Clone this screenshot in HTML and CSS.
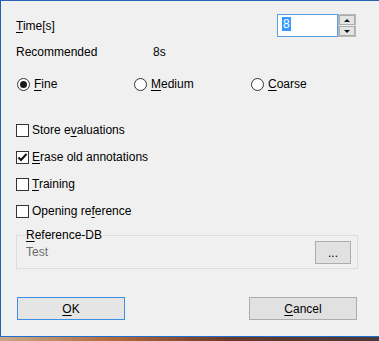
FILE: index.html
```html
<!DOCTYPE html>
<html lang="en">
<head>
    <meta charset="UTF-8">
    <title>Evaluation settings</title>
    <link rel="stylesheet" href="styles.css">
</head>
<body>
    <div class="dialog">
        <div class="row row-time">
            <span><u>T</u>ime[s]</span>
            <div class="spin">
                <div class="spin-field"><span class="sel">8</span></div>
                <div class="spin-btns">
                    <div class="spin-btn"><span class="arrow-up"></span></div>
                    <div class="spin-btn"><span class="arrow-down"></span></div>
                </div>
            </div>
        </div>

        <div class="row row-rec">
            <span class="rec-label">Recommended</span>
            <span>8s</span>
        </div>

        <div class="row row-radios">
            <label class="radio-item"><span class="radio checked"></span><span><u>F</u>ine</span></label>
            <label class="radio-item"><span class="radio"></span><span><u>M</u>edium</span></label>
            <label class="radio-item"><span class="radio"></span><span><u>C</u>oarse</span></label>
        </div>

        <div class="checks">
            <label class="check-item"><span class="box"></span><span>Store e<u>v</u>aluations</span></label>
            <label class="check-item"><span class="box">
                <svg width="11" height="11" viewBox="0 0 11 11"><path d="M1.5 5.5 L4 8 L9.5 2" fill="none" stroke="#111" stroke-width="2"/></svg>
            </span><span><u>E</u>rase old annotations</span></label>
            <label class="check-item"><span class="box"></span><span><u>T</u>raining</span></label>
            <label class="check-item"><span class="box"></span><span>Opening re<u>f</u>erence</span></label>
        </div>

        <div class="group">
            <span class="group-title"><u>R</u>eference-DB</span>
            <div class="group-body">
                <span class="db-name">Test</span>
                <button class="btn btn-browse">...</button>
            </div>
        </div>

        <div class="row row-buttons">
            <button class="btn btn-main btn-focus"><u>O</u>K</button>
            <button class="btn btn-main"><u>C</u>ancel</button>
        </div>
    </div>
    <div class="desk"></div>
</body>
</html>
```

FILE: styles.css
```css
body {
    margin: 0;
    padding: 0;
    width: 379px;
    height: 341px;
    overflow: hidden;
    font-family: "Liberation Sans", Arial, sans-serif;
    font-size: 12px;
    color: #000;
    background-color: #f0f0f0;
}

u {
    text-decoration: underline;
    text-underline-offset: 2px;
}

.dialog {
    box-sizing: border-box;
    width: 379px;
    height: 337px;
    border-top: 1px solid #2a64b4;
    border-left: 1px solid #1f5fb0;
    border-bottom: 1px solid #1f6fd0;
    padding: 0 21px 0 15px;
    background-color: #f0f0f0;
    display: flex;
    flex-direction: column;
}

.desk {
    height: 4px;
    background: linear-gradient(90deg, #c8a98a 0, #b06a3c 30%, #6a3a2a 60%, #4a3a38 100%);
}

.row {
    display: flex;
    align-items: center;
}

.row-time {
    margin-top: 13px;
    height: 23px;
}

.spin {
    margin-left: auto;
    margin-right: 2px;
    display: flex;
    height: 23px;
}

.spin-field {
    box-sizing: border-box;
    width: 61px;
    height: 23px;
    border: 1px solid #5a9ee2;
    background-color: #fff;
    padding: 2px 0 0 4px;
}

.sel {
    display: inline-block;
    background-color: #3399ff;
    color: #fff;
    line-height: 14px;
    padding: 0 1px;
}

.spin-btns {
    box-sizing: border-box;
    width: 18px;
    height: 23px;
    border: 1px solid #b9b9b9;
    display: grid;
    grid-template-rows: 1fr 1fr;
    gap: 1px;
    background-color: #f0f0f0;
}

.spin-btn {
    background-color: #e4e4e4;
    border: 1px solid #adadad;
    display: flex;
    align-items: center;
    justify-content: center;
}

.arrow-up {
    width: 0;
    height: 0;
    border-left: 3px solid transparent;
    border-right: 3px solid transparent;
    border-bottom: 3px solid #111;
}

.arrow-down {
    width: 0;
    height: 0;
    border-left: 3px solid transparent;
    border-right: 3px solid transparent;
    border-top: 3px solid #111;
}

.row-rec {
    margin-top: 5px;
    height: 20px;
}

.rec-label {
    width: 137px;
}

.row-radios {
    margin-top: 12px;
    height: 20px;
    padding-left: 1px;
}

.radio-item {
    flex: none;
    width: 117px;
    display: flex;
    align-items: center;
    gap: 4px;
}

.radio-item:last-child {
    width: auto;
}

.radio {
    box-sizing: border-box;
    width: 13px;
    height: 13px;
    border: 1px solid #333;
    border-radius: 50%;
    background-color: #fff;
    display: flex;
    align-items: center;
    justify-content: center;
}

.radio.checked::after {
    content: "";
    width: 7px;
    height: 7px;
    border-radius: 50%;
    background-color: #1a1a1a;
}

.checks {
    margin-top: 26px;
    display: flex;
    flex-direction: column;
    gap: 7px;
}

.check-item {
    height: 20px;
    display: flex;
    align-items: center;
    gap: 3px;
}

.box {
    box-sizing: border-box;
    width: 13px;
    height: 13px;
    border: 1px solid #333;
    background-color: #fff;
    display: flex;
    align-items: center;
    justify-content: center;
}

.group {
    box-sizing: border-box;
    margin-top: 14px;
    height: 34px;
    border: 1px solid #dcdcdc;
    padding: 0 6px 3px 9px;
    display: flex;
    flex-direction: column;
}

.group-title {
    align-self: flex-start;
    margin-top: -8px;
    margin-left: -1px;
    line-height: 15px;
    height: 15px;
    padding: 0 1px;
    background-color: #f0f0f0;
}

.group-body {
    margin-top: -2px;
    height: 23px;
    display: flex;
    align-items: center;
}

.db-name {
    color: #6d6d6d;
    margin-top: -2px;
}

.btn {
    box-sizing: border-box;
    font-family: "Liberation Sans", Arial, sans-serif;
    font-size: 12px;
    color: #000;
    background-color: #e1e1e1;
    border: 1px solid #adadad;
    border-radius: 0;
    padding: 0;
    height: 23px;
}

.btn-browse {
    margin-left: auto;
    width: 36px;
    line-height: 14px;
}

.row-buttons {
    margin-top: 28px;
    justify-content: space-between;
    padding: 0 1px;
}

.btn-main {
    width: 108px;
}

.btn-focus {
    border-color: #3d8ee6;
    background-color: #e5e5e5;
}
```
